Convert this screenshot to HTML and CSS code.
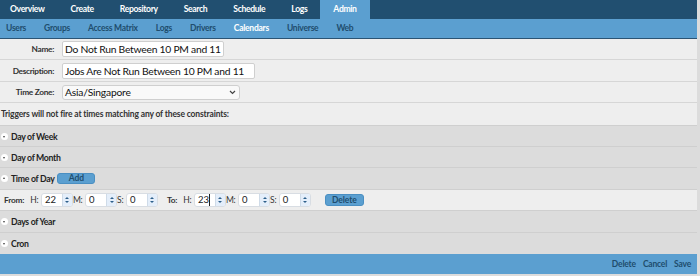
FILE: index.html
```html
<!DOCTYPE html>
<html>
<head>
<meta charset="utf-8">
<link rel="stylesheet" href="styles.css">
</head>
<body>
<div class="app">
  <nav class="topnav">
    <a class="tab">Overview</a>
    <a class="tab">Create</a>
    <a class="tab">Repository</a>
    <a class="tab">Search</a>
    <a class="tab">Schedule</a>
    <a class="tab">Logs</a>
    <a class="tab active">Admin</a>
  </nav>
  <nav class="subnav">
    <a class="sub">Users</a>
    <a class="sub">Groups</a>
    <a class="sub">Access Matrix</a>
    <a class="sub">Logs</a>
    <a class="sub">Drivers</a>
    <a class="sub active">Calendars</a>
    <a class="sub">Universe</a>
    <a class="sub">Web</a>
  </nav>
  <div class="form">
    <div class="row r1">
      <label class="lbl">Name:</label>
      <input class="text name" type="text" value="Do Not Run Between 10 PM and 11">
    </div>
    <div class="row r2">
      <label class="lbl">Description:</label>
      <input class="text desc" type="text" value="Jobs Are Not Run Between 10 PM and 11">
    </div>
    <div class="row r3">
      <label class="lbl">Time Zone:</label>
      <div class="select">
        <span>Asia/Singapore</span>
        <svg class="chev" width="7" height="5" viewBox="0 0 7 5"><path d="M1 1 L3.5 3.5 L6 1" fill="none" stroke="#444" stroke-width="1.2"/></svg>
      </div>
    </div>
    <div class="row note">Triggers will not fire at times matching any of these constraints:</div>
  </div>

  <div class="section s21"><span class="toggle down"></span>Day of Week</div>
  <div class="section s21"><span class="toggle down"></span>Day of Month</div>
  <div class="section"><span class="toggle up"></span><span class="ttl">Time of Day</span><button class="btn add">Add</button></div>
  <div class="timerow">
    <span class="tlbl from">From:</span>
    <span class="unit">H:</span>
    <span class="spin"><span class="val">22</span><span class="arrows"><i class="u"></i><i class="d"></i></span></span>
    <span class="unit">M:</span>
    <span class="spin"><span class="val">0</span><span class="arrows"><i class="u"></i><i class="d"></i></span></span>
    <span class="unit">S:</span>
    <span class="spin"><span class="val">0</span><span class="arrows"><i class="u"></i><i class="d"></i></span></span>
    <span class="tlbl to">To:</span>
    <span class="unit">H:</span>
    <span class="spin"><span class="val">23<b class="caret"></b></span><span class="arrows"><i class="u"></i><i class="d"></i></span></span>
    <span class="unit">M:</span>
    <span class="spin"><span class="val">0</span><span class="arrows"><i class="u"></i><i class="d"></i></span></span>
    <span class="unit">S:</span>
    <span class="spin"><span class="val">0</span><span class="arrows"><i class="u"></i><i class="d"></i></span></span>
    <button class="btn del">Delete</button>
  </div>
  <div class="section"><span class="toggle down"></span>Days of Year</div>
  <div class="section"><span class="toggle down"></span>Cron</div>
  <div class="footer">
    <a class="act">Delete</a>
    <a class="act">Cancel</a>
    <a class="act">Save</a>
  </div>
</div>
</body>
</html>
```
FILE: styles.css
```css
* { box-sizing: border-box; }
html, body { margin: 0; padding: 0; }
body {
  background: #dcdcdc;
  font-family: "Lato", "DejaVu Sans", sans-serif;
  color: #333;
  width: 700px;
  height: 276px;
  overflow: hidden;
}
.app {
  width: 697px;
  background: #eeeeee;
}
.topnav {
  display: flex;
  height: 19px;
  background: #214f70;
}
.tab {
  color: #fff;
  font-weight: bold;
  font-size: 8.6px;
  letter-spacing: -0.35px;
  line-height: 19px;
  padding: 0 13px;
}
.tab:first-child { padding-left: 10px; }
.tab.active { background: #5b9fd0; }
.subnav {
  display: flex;
  gap: 18px;
  height: 20px;
  background: #5b9fd0;
  border-bottom: 1px solid #2b5474;
  padding-left: 6px;
}
.sub {
  color: #204d6d;
  font-weight: bold;
  font-size: 8.5px;
  letter-spacing: -0.25px;
  line-height: 19px;
}
.sub.active { color: #fff; }

.row {
  display: flex;
  align-items: center;
  border-bottom: 1px solid #d6d6d6;
}
.r1 { height: 21px; }
.r2 { height: 22px; }
.r3 { height: 21px; }
.lbl {
  width: 54px;
  text-align: right;
  font-weight: bold;
  font-size: 8.3px;
  letter-spacing: -0.3px;
  color: #333;
  margin-right: 8px;
}
.text {
  font-family: "Lato", sans-serif;
  font-size: 10.3px;
  letter-spacing: -0.25px;
  height: 16px;
  border: 1px solid #cfcfcf;
  border-radius: 2px;
  padding: 0 2px;
  color: #111;
  background: #fff;
  outline: none;
}
.name { width: 162px; }
.desc { width: 193px; }
.select {
  display: flex;
  align-items: center;
  justify-content: space-between;
  width: 178px;
  height: 15px;
  border: 1px solid #cfcfcf;
  border-radius: 3px;
  background: #f9f9f9;
  padding: 0 3px 0 2px;
  font-size: 10.3px;
  letter-spacing: -0.2px;
  color: #111;
}
.note {
  font-weight: bold;
  font-size: 8.5px;
  letter-spacing: -0.15px;
  padding-left: 1px;
  border-bottom: none;
  height: 22px;
}

.section {
  display: flex;
  align-items: center;
  height: 22px;
  background: #dcdcdc;
  border-top: 1px solid #cfcfcf;
  font-weight: bold;
  font-size: 8.7px;
  letter-spacing: -0.3px;
  color: #222;
}
.section.s21 { height: 21px; }
.toggle {
  position: relative;
  width: 7px;
  height: 7px;
  border-radius: 50%;
  background: #fff;
  margin: 0 3px 0 1px;
}
.toggle::after {
  content: "";
  position: absolute;
  left: 2px;
  border-left: 1.5px solid transparent;
  border-right: 1.5px solid transparent;
}
.toggle.down::after { top: 3px; border-top: 2px solid #444; }
.toggle.up::after { top: 2px; border-bottom: 2px solid #444; }

.btn {
  font-family: inherit;
  font-weight: bold;
  font-size: 8.5px;
  letter-spacing: -0.1px;
  color: #204d6d;
  background: #5b9fd0;
  border: 1px solid #4a8fc2;
  border-radius: 3px;
  padding: 0;
  height: 11px;
  line-height: 9px;
}
.add { width: 38px; margin-left: 3px; }

.timerow {
  display: flex;
  align-items: center;
  height: 21px;
  background: #eeeeee;
  border-top: 1px solid #cfcfcf;
  color: #333;
}
.tlbl { font-weight: bold; font-size: 8.3px; letter-spacing: -0.2px; }
.from { margin-left: 4px; margin-right: 6px; }
.to { margin-left: 9px; margin-right: 6px; }
.unit { margin-right: 2.5px; font-size: 8.5px; letter-spacing: -0.2px; }
.spin {
  display: flex;
  height: 14px;
  width: 32px;
  border: 1px solid #d8dde3;
  border-radius: 3px;
  background: #fff;
}
.val {
  position: relative;
  flex: 1;
  padding-left: 3px;
  font-size: 9.5px;
  line-height: 12px;
  color: #222;
}
.caret {
  position: absolute;
  left: 14px;
  top: 0;
  width: 1px;
  height: 12px;
  background: #222;
}
.arrows {
  display: flex;
  flex-direction: column;
  justify-content: center;
  align-items: center;
  gap: 2px;
  width: 10px;
  background: #e4eefa;
  border-left: 1px solid #cfdbe8;
  border-radius: 0 2px 2px 0;
}
.arrows i {
  display: block;
  width: 0;
  height: 0;
  border-left: 2px solid transparent;
  border-right: 2px solid transparent;
}
.arrows .u { border-bottom: 2px solid #2d5f8a; }
.arrows .d { border-top: 2px solid #2d5f8a; }
.del { width: 39px; margin-left: 14px; height: 12px; }

.footer {
  display: flex;
  justify-content: flex-end;
  align-items: center;
  gap: 7px;
  height: 20px;
  background: #5b9fd0;
  padding-right: 6px;
}
.act {
  font-weight: bold;
  font-size: 8.5px;
  letter-spacing: -0.2px;
  color: #204d6d;
}
```
